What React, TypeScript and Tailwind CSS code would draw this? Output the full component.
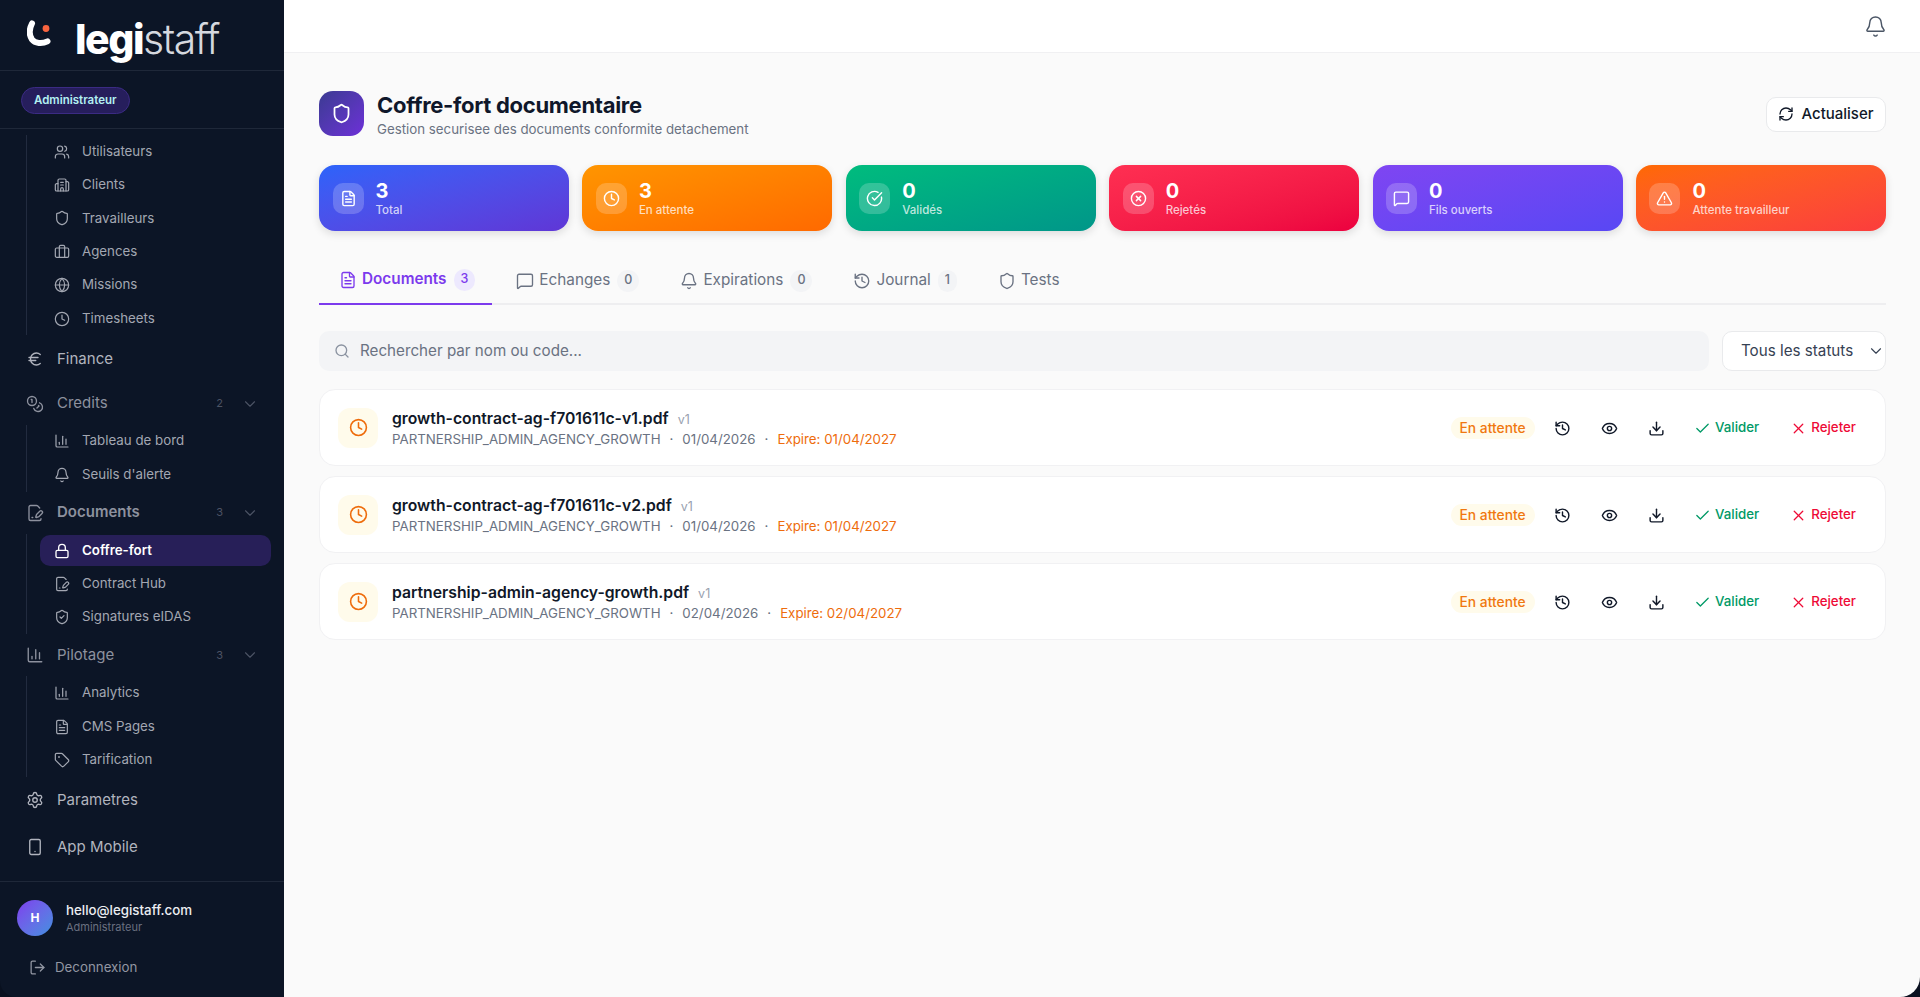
import {
  Bell, BarChart3, Briefcase, Building2, Check, CircleCheckBig, ChevronDown, Clock, Coins, Download, Euro, Eye,
  FileSignature, FileText, Globe, History, Lock, LogOut, MessageSquare, RefreshCw, Search, Settings, Shield,
  ShieldCheck, Smartphone, Tag, TriangleAlert, Users, X, XCircle,
} from 'lucide-react';
import type { ComponentType, ReactNode } from 'react';

type IconType = ComponentType<{ size?: number; className?: string; strokeWidth?: number }>;

const stats = [
  { value: '3', label: 'Total', icon: FileText, bg: 'bg-gradient-to-br from-[#2b63fa] to-[#5f36d6]' },
  { value: '3', label: 'En attente', icon: Clock, bg: 'bg-gradient-to-br from-[#ff9500] to-[#ff6900]' },
  { value: '0', label: 'Validés', icon: CircleCheckBig, bg: 'bg-gradient-to-br from-[#00bc7d] to-[#009689]' },
  { value: '0', label: 'Rejetés', icon: XCircle, bg: 'bg-gradient-to-br from-[#ff2f52] to-[#ec003f]' },
  { value: '0', label: 'Fils ouverts', icon: MessageSquare, bg: 'bg-gradient-to-br from-[#7f45f2] to-[#5847f4]' },
  { value: '0', label: 'Attente travailleur', icon: TriangleAlert, bg: 'bg-gradient-to-br from-[#ff6900] to-[#fb3c3c]' },
];

const tabs = [
  { label: 'Documents', icon: FileText, count: '3', active: true },
  { label: 'Echanges', icon: MessageSquare, count: '0' },
  { label: 'Expirations', icon: Bell, count: '0' },
  { label: 'Journal', icon: History, count: '1' },
  { label: 'Tests', icon: Shield },
];

const docs = [
  { name: 'growth-contract-ag-f701611c-v1.pdf', date: '01/04/2026', expire: '01/04/2027' },
  { name: 'growth-contract-ag-f701611c-v2.pdf', date: '01/04/2026', expire: '01/04/2027' },
  { name: 'partnership-admin-agency-growth.pdf', date: '02/04/2026', expire: '02/04/2027' },
];

function SubItem({ icon: Icon, label, active }: { icon: IconType; label: string; active?: boolean }) {
  return (
    <div className="h-[33.4px] flex items-center">
      <div
        className={`w-[231px] h-[31.5px] rounded-[10px] flex items-center pl-[13.5px] gap-[12.5px] text-[13.3px] ${
          active ? 'bg-[#271f58] text-white font-semibold' : 'text-[#a3a7b2]'
        }`}
      >
        <Icon size={16} strokeWidth={active ? 2 : 1.8} />
        {label}
      </div>
    </div>
  );
}

function SubList({ children }: { children: ReactNode }) {
  return <div className="ml-[26px] border-l border-[#222b3f] pl-[13px]">{children}</div>;
}

function MainItem({ icon: Icon, label }: { icon: IconType; label: string }) {
  return (
    <div className="h-[47px] flex items-center pl-[25.5px] gap-[13.5px] text-[15px] text-[#b1b4be]">
      <Icon size={18} strokeWidth={1.8} />
      {label}
    </div>
  );
}

function GroupHeader({ icon: Icon, label, count, bold }: { icon: IconType; label: string; count: string; bold?: boolean }) {
  return (
    <div className={`h-[42.4px] flex items-center pl-[25.5px] pr-[25px] gap-[13.5px] text-[15px] text-[#8d919e] ${bold ? 'font-semibold' : ''}`}>
      <Icon size={18} strokeWidth={1.8} />
      <span className="flex-1">{label}</span>
      <span className="text-[11px] font-normal text-[#4c5364] mr-[4px]">{count}</span>
      <ChevronDown size={18} strokeWidth={1.5} className="text-[#4c5364]" />
    </div>
  );
}

function Sidebar() {
  return (
    <aside className="w-[283.5px] shrink-0 h-full bg-[#0c1526] rounded-bl-[16px] flex flex-col">
      {/* Logo */}
      <div className="h-[71px] shrink-0 border-b border-[#1f2839] flex items-center pl-[27px]">
        <svg width="24" height="28" viewBox="0 0 24 28" className="mb-[2px]">
          <path d="M5 3.5C2.2 9 2 15 5 19.5c3 4 10 4.6 15.5 1.8" fill="none" stroke="#fff" strokeWidth="6" strokeLinecap="round" />
          <circle cx="19" cy="8.5" r="3.4" fill="#f9643f" />
        </svg>
        <div className="ml-[24px] mt-[8px] text-[41px] leading-none tracking-[-1.5px]">
          <span className="font-extrabold text-white">legi</span>
          <span className="font-light text-[#d5d8df]">staff</span>
        </div>
      </div>

      {/* Role */}
      <div className="h-[58px] shrink-0 border-b border-[#1f2839] flex items-center pl-[21px] pt-[2px]">
        <span className="h-[27px] px-[12px] rounded-full bg-[#261e5c] border border-[#3b2b84] flex items-center text-[11.5px] font-semibold text-[#b3f0f2]">
          Administrateur
        </span>
      </div>

      {/* Nav */}
      <nav className="flex-1 pt-[6px] min-h-0">
        <SubList>
          <SubItem icon={Users} label="Utilisateurs" />
          <SubItem icon={Building2} label="Clients" />
          <SubItem icon={Shield} label="Travailleurs" />
          <SubItem icon={Briefcase} label="Agences" />
          <SubItem icon={Globe} label="Missions" />
          <SubItem icon={Clock} label="Timesheets" />
        </SubList>
        <MainItem icon={Euro} label="Finance" />
        <GroupHeader icon={Coins} label="Credits" count="2" />
        <SubList>
          <SubItem icon={BarChart3} label="Tableau de bord" />
          <SubItem icon={Bell} label="Seuils d'alerte" />
        </SubList>
        <GroupHeader icon={FileSignature} label="Documents" count="3" bold />
        <SubList>
          <SubItem icon={Lock} label="Coffre-fort" active />
          <SubItem icon={FileSignature} label="Contract Hub" />
          <SubItem icon={ShieldCheck} label="Signatures eIDAS" />
        </SubList>
        <GroupHeader icon={BarChart3} label="Pilotage" count="3" />
        <SubList>
          <SubItem icon={BarChart3} label="Analytics" />
          <SubItem icon={FileText} label="CMS Pages" />
          <SubItem icon={Tag} label="Tarification" />
        </SubList>
        <MainItem icon={Settings} label="Parametres" />
        <MainItem icon={Smartphone} label="App Mobile" />
      </nav>

      {/* User */}
      <div className="h-[116px] shrink-0 border-t border-[#1f2839] pl-[17px] pt-[18px]">
        <div className="flex items-center gap-[13px]">
          <div className="w-[36px] h-[36px] rounded-full bg-gradient-to-br from-[#7c3aed] to-[#3b8fe0] flex items-center justify-center text-[12px] font-bold text-white">
            H
          </div>
          <div>
            <div className="text-[13.3px] leading-[17px] font-medium text-[#eceef2]">hello@legistaff.com</div>
            <div className="text-[11px] leading-[16px] text-[#6a7080]">Administrateur</div>
          </div>
        </div>
        <div className="mt-[22px] ml-[12px] flex items-center gap-[9px] text-[13.3px] text-[#9296a2]">
          <LogOut size={17} strokeWidth={1.8} />
          Deconnexion
        </div>
      </div>
    </aside>
  );
}

function DocRow({ name, date, expire }: { name: string; date: string; expire: string }) {
  return (
    <div className="h-[77px] bg-white border border-[#f1f1f3] rounded-[16px] flex items-center pl-[18px] pr-[29px]">
      <div className="w-[40px] h-[40px] rounded-[12px] bg-[#fffbeb] flex items-center justify-center">
        <Clock size={19} className="text-[#ee6c0c]" />
      </div>
      <div className="ml-[14px] mt-[3px] flex-1 min-w-0">
        <div className="h-[20px] flex items-baseline gap-[9px]">
          <span className="text-[15.75px] leading-[20px] font-semibold text-[#101828]">{name}</span>
          <span className="text-[12.5px] text-[#99a1af]">v1</span>
        </div>
        <div className="text-[13.3px] leading-[20px] text-[#6a7282] flex gap-[9px]">
          <span>PARTNERSHIP_ADMIN_AGENCY_GROWTH</span>
          <span>·</span>
          <span>{date}</span>
          <span>·</span>
          <span className="text-[#ee6c0c]">Expire: {expire}</span>
        </div>
      </div>
      <span className="h-[22px] w-[84px] mt-[1px] rounded-full bg-[#fffbeb] flex items-center justify-center text-[13.8px] font-medium text-[#f0780f]">
        En attente
      </span>
      <div className="ml-[19px] mt-[1px] flex items-center gap-[30px] text-[#101828]">
        <History size={17} />
        <Eye size={17} />
        <Download size={17} />
      </div>
      <div className="ml-[29.5px] mt-[1px] flex items-center gap-[4px] text-[13.3px] font-medium text-[#009966]">
        <Check size={17} strokeWidth={1.8} />
        Valider
      </div>
      <div className="ml-[31px] mt-[1px] flex items-center gap-[4px] text-[13.3px] font-medium text-[#ee0a36]">
        <X size={17} strokeWidth={1.8} />
        Rejeter
      </div>
    </div>
  );
}

export default function App() {
  return (
    <div className="w-full h-[997px] overflow-hidden flex bg-[#09101f] font-['Inter',sans-serif]">
      <Sidebar />
      <main className="flex-1 min-w-0 flex flex-col bg-[#fafafa] rounded-br-[20px]">
        <header className="h-[53px] shrink-0 bg-white border-b border-[#f0f0f2] flex items-center justify-end pr-[33px]">
          <Bell size={23} className="text-[#4a5565]" strokeWidth={1.5} />
        </header>
        <div className="pl-[35.5px] pr-[34px] pt-[38px]">
          {/* Title */}
          <div className="h-[45px] flex items-center">
            <div className="w-[45px] h-[45px] rounded-[14px] bg-gradient-to-br from-[#3b3a92] to-[#6d2fd8] flex items-center justify-center">
              <Shield size={21} className="text-white" />
            </div>
            <div className="ml-[13px] mt-[3px] flex-1">
              <h1 className="text-[22px] leading-[28px] font-bold text-[#0f172a] tracking-[-0.3px]">Coffre-fort documentaire</h1>
              <p className="text-[13.3px] leading-[20px] text-[#6a7282]">Gestion securisee des documents conformite detachement</p>
            </div>
            <button className="w-[120px] h-[35px] mt-[1px] rounded-[10px] bg-white border border-[#e9eaec] flex items-center justify-center gap-[7px] text-[15px] font-medium text-[#101828]">
              <RefreshCw size={16} />
              Actualiser
            </button>
          </div>

          {/* Stat cards */}
          <div className="mt-[29px] grid grid-cols-6 gap-[13.3px]">
            {stats.map((s) => {
              const Icon = s.icon;
              return (
                <div key={s.label} className={`h-[66px] rounded-[16px] ${s.bg} shadow-[0_3px_8px_rgba(0,0,0,0.12)] flex items-center pl-[13.5px] gap-[12px] text-white`}>
                  <div className="w-[31px] h-[31px] rounded-[10px] bg-white/20 flex items-center justify-center">
                    <Icon size={17} />
                  </div>
                  <div>
                    <div className="text-[20px] leading-[23px] font-bold">{s.value}</div>
                    <div className="text-[11.5px] leading-[14px] font-medium text-white/75">{s.label}</div>
                  </div>
                </div>
              );
            })}
          </div>

          {/* Tabs */}
          <div className="mt-[25px] h-[49px] flex gap-[4px] border-b-2 border-[#eeeef0]">
            {tabs.map((t) => {
              const Icon = t.icon;
              return (
                <div
                  key={t.label}
                  className={`h-[49px] pl-[20px] pr-[17px] flex items-center gap-[5px] text-[15.3px] ${
                    t.active ? 'border-b-2 border-[#7c3aed] text-[#7c3aed] font-semibold' : 'text-[#6a7282]'
                  }`}
                >
                  <Icon size={18} strokeWidth={1.8} />
                  {t.label}
                  {t.count && (
                    <span className={`ml-[2px] px-[7px] h-[22px] rounded-full flex items-center justify-center text-[12.5px] font-medium ${t.active ? 'bg-[#ede9fe]' : 'bg-[#f3f4f6]'}`}>
                      {t.count}
                    </span>
                  )}
                </div>
              );
            })}
          </div>

          {/* Search */}
          <div className="mt-[26px] flex gap-[13px]">
            <div className="flex-1 h-[40px] rounded-[10px] bg-[#f3f4f6] flex items-center pl-[15px] gap-[10px] text-[15.2px] text-[#6a7282]">
              <Search size={16} className="text-[#8a92a0]" />
              Rechercher par nom ou code...
            </div>
            <div className="w-[164px] h-[40px] rounded-[10px] bg-white border border-[#e9eaec] flex items-center pl-[18px] justify-between text-[15.2px] text-[#364153]">
              Tous les statuts
              <ChevronDown size={18} strokeWidth={1.5} />
            </div>
          </div>

          {/* Documents */}
          <div className="mt-[18px] flex flex-col gap-[10px]">
            {docs.map((d) => (
              <DocRow key={d.name} name={d.name} date={d.date} expire={d.expire} />
            ))}
          </div>
        </div>
      </main>
    </div>
  );
}
